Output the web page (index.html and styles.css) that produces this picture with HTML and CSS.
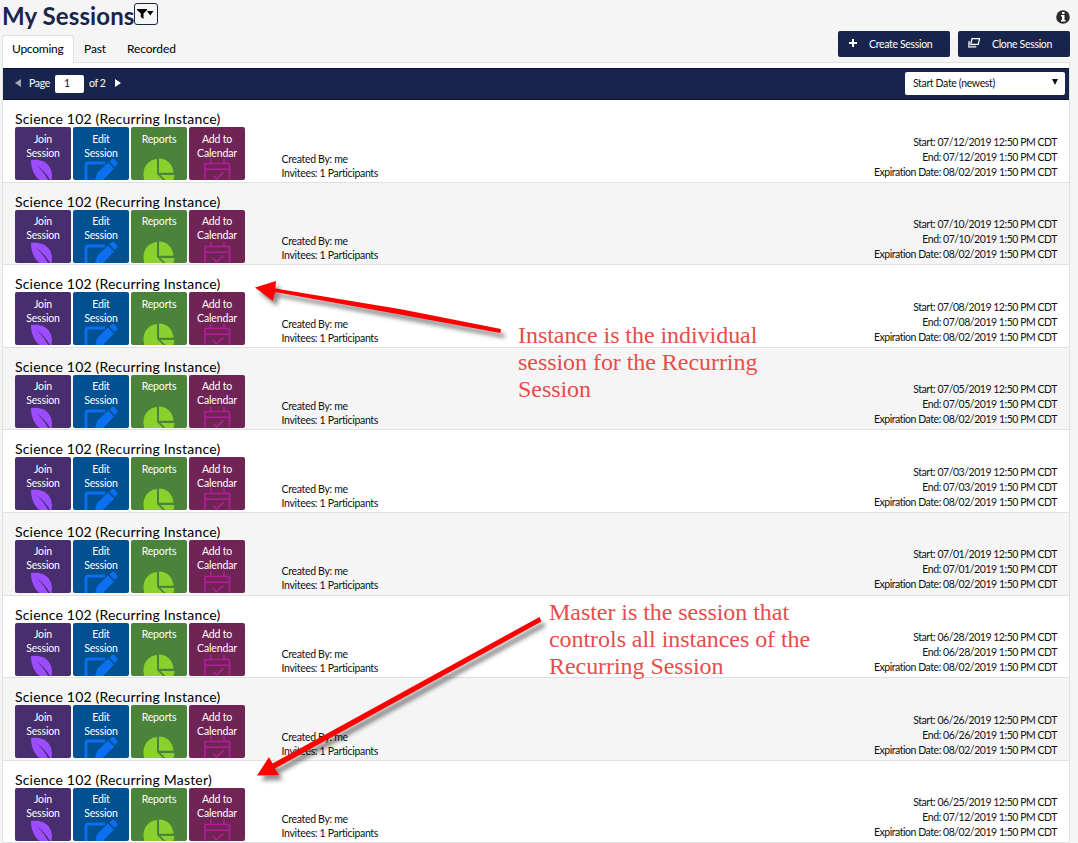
FILE: index.html
```html
<!DOCTYPE html>
<html lang="en">
  <head>
    <meta charset="utf-8" />
    <title>My Sessions</title>
    <link rel="stylesheet" href="styles.css">
  </head>
  <body>
    <!-- icons used by the action tiles -->
    <svg width="0" height="0" class="sprites">
      <symbol id="leaf" viewBox="0 0 24 20" overflow="visible">
        <path fill="#9b4dff" d="M0 0C9-1 14 1 18 6q3 4 3 9l-.5 6H10C3 17 0 8 0 0z"/>
        <path fill="#482e6e" d="M4 4c6 4 11 9 15 16h-2C14 14 9 8 4 4z"/>
      </symbol>
      <symbol id="edit" viewBox="0 0 34 20" overflow="visible">
        <path fill="none" stroke="#0b6ff0" stroke-width="2.800" d="M21 3H4q-2 0-2 2v16"/>
        <path fill="#0b6ff0" d="M10.700 21l2.500-8L24 2.500l6 6L18 21zM25.500 1.500L28-.7q1.200-1 2.400 0L33 2.200q1 1.200 0 2.400L31 7z"/>
      </symbol>
      <symbol id="pie" viewBox="0 0 32 20" overflow="visible">
        <path fill="#8ad12d" d="M14-1v15l7 7H1.500C-2 9 4 0 14-1z"/>
        <path fill="#8ad12d" d="M16-1.500c8 0 14 6 14.500 14.200H16zM17.500 15h14q-.5 3-1.500 6h-6.500z"/>
      </symbol>
      <symbol id="cal" viewBox="0 0 26 20" overflow="visible">
        <path fill="none" stroke="#b01f98" stroke-width="1.600" d="M1 21V3.500h24.500V21M1 9.300h24M6.700-1.500v5M20-1.500v5M9 15.500l3.500 3.500 7-6.500"/>
      </symbol>
    </svg>

    <div class="header">
      <div class="title">My Sessions</div>
      <div class="filter">
        <svg width="18" height="12" viewBox="0 0 18 12"><path d="M0 1h10v1L6.500 5.500V11L3.800 9V5.500L0 2zM10 3h6.500l-3.200 4.500z"/></svg>
      </div>
      <svg class="info" width="14" height="14" viewBox="0 0 14 14">
        <circle cx="7" cy="7" r="6.800" fill="#2b2b2b"/>
        <path fill="#fff" d="M6 2h2.500v2H6zM5 5h3.500v5H9.500v1.500H5V10h1V6.500H5z"/>
      </svg>
    </div>

    <div class="nav">
      <div class="tab active">Upcoming</div>
      <div class="tab past">Past</div>
      <div class="tab">Recorded</div>
      <div class="buttons">
        <div class="btn create">
          <svg width="14" height="12" viewBox="0 0 14 12"><path fill="none" stroke="#fff" stroke-width="2" d="M5 1v8M1 5h8"/></svg>
          <span>Create Session</span>
        </div>
        <div class="btn clone">
          <svg width="14" height="12" viewBox="0 0 14 12"><path fill="none" stroke="#fff" stroke-width="1.200" d="M4 .6h7.500l-1.200 5.800H2.800z"/><path fill="none" stroke="#b9bdcb" stroke-width="2" d="M1.500 3L.3 8.800h8"/></svg>
          <span>Clone Session</span>
        </div>
      </div>
    </div>

    <div class="panel">
      <div class="pager">
        <i class="arrow prev"></i>
        <span>Page</span>
        <div class="pageBox">1</div>
        <span>of 2</span>
        <i class="arrow next"></i>
        <div class="sort"><span>Start Date (newest)</span><i class="down"></i></div>
      </div>
      <div id="sessions"></div>
    </div>

    <!-- notes over the list -->
    <svg class="arrows" width="1078" height="843" viewBox="0 0 1078 843">
      <g fill="red">
        <path d="M255 287.500l21-6.500-.6 7.600 125.600 20.700 100 19.700-.7 4L400 314.500l-125-22.500-2.200 9z"/>
        <path d="M257 775.500l12-18.500 3.500 6.500L539.500 617l2 4.500L275 768.500l4 6.500z"/>
      </g>
    </svg>
    <div class="note instance">Instance is the individual<br>session for the Recurring<br>Session</div>
    <div class="note master">Master is the session that<br>controls all instances of the<br>Recurring Session</div>

    <script src="sessions.js"></script>
  </body>
</html>
```

FILE: styles.css
```css
* {
  box-sizing: border-box;
}
body {
  margin: 0;
  height: 843px;
  overflow: hidden;
  position: relative;
  background: #f5f5f5;
  font-family: Lato, sans-serif;
  font-size: 10.5px;
  color: #111;
}
.sprites {
  position: absolute;
}
.header {
  display: flex;
  align-items: flex-start;
  height: 35px;
  padding: 3px 8px 0 2px;
}
.title {
  font-size: 24px;
  line-height: 26px;
  font-weight: 700;
  color: #17244b;
  width: 132px;
  letter-spacing: 0.1px;
  white-space: nowrap;
}
.filter {
  width: 24px;
  height: 22px;
  border: 1px solid #17244b;
  border-radius: 3px;
  padding: 4px 0 0 2px;
}
.filter svg {
  display: block;
}
.info {
  margin: 7px 0 0 auto;
}

/* tabs */
.nav {
  display: flex;
  height: 28px;
  margin-left: 2px;
  font-size: 12px;
}
.tab {
  height: 27px;
  line-height: 28px;
  padding: 0 10px;
  color: #000;
  letter-spacing: -0.13px;
}
.tab.active {
  position: relative;
  height: 28px;
  width: 72px;
  padding: 0 0 0 9px;
  line-height: 26px;
  letter-spacing: -0.25px;
  background: #fff;
  border: 1px solid #e0e0e0;
  border-bottom: 0;
  border-radius: 3px 3px 0 0;
  z-index: 1;
}
.tab.past {
  width: 43px;
}
.buttons {
  display: flex;
  gap: 8px;
  margin: -4px 8px 0 auto;
}
.btn {
  display: flex;
  align-items: center;
  width: 112px;
  height: 26px;
  padding: 0 0 1px 10px;
  border-radius: 2px;
  background: #17244b;
  color: #fff;
  font-size: 10.5px;
  letter-spacing: -0.32px;
  white-space: nowrap;
}
.btn span {
  margin-left: 7px;
}
.btn.clone span {
  margin-left: 10px;
}

/* list */
.panel {
  width: 1068px;
  margin: -1px 0 0 2px;
  padding-top: 5px;
  border: 1px solid #e0e0e0;
  border-bottom: 0;
  background: #fff;
}
.pager {
  display: flex;
  align-items: center;
  height: 32px;
  padding: 0 4px 0 12px;
  background: #17244b;
  border-top: 1px solid #0b1533;
  border-bottom: 1px solid #0b1533;
  color: #fff;
  letter-spacing: -0.35px;
}
.pager > span {
  margin-top: -2px;
}
.arrow {
  border: 4px solid transparent;
  border-left-width: 0;
  border-right: 6px solid #a3a8b7;
  margin-top: -2px;
}
.arrow.next {
  border-right-width: 0;
  border-left: 6px solid #fff;
  margin-left: 9px;
}
.arrow.prev {
  margin-right: 8px;
}
.pageBox {
  width: 29px;
  height: 18px;
  margin: 0 5px;
  padding-left: 9px;
  line-height: 17px;
  border-radius: 2px;
  background: #fff;
  color: #111;
}
.sort {
  display: flex;
  justify-content: space-between;
  align-items: center;
  width: 160px;
  height: 23px;
  margin: -2px 0 0 auto;
  padding: 0 7px 0 8px;
  border-radius: 2px;
  background: #fff;
  color: #111;
}
.down {
  border: 3px solid transparent;
  border-top: 6px solid #111;
  border-bottom: 0;
  margin-top: -2px;
}
.row {
  display: flex;
  height: 82.6px;
  padding: 10px 12px 0 12px;
  border-bottom: 1px solid #e0e0e0;
}
.row:nth-child(even) {
  background: #f5f5f5;
}
.left {
  width: 266.5px;
}
.name {
  height: 17px;
  line-height: 17px;
  font-size: 14px;
  letter-spacing: 0.19px;
  color: #000;
  white-space: nowrap;
}
.tiles {
  display: flex;
  gap: 2px;
}
.tile {
  display: flex;
  flex-direction: column;
  align-items: center;
  width: 56px;
  height: 53px;
  padding-top: 4.5px;
  overflow: hidden;
  border-radius: 2px;
  color: #fff;
  font-size: 10.5px;
  letter-spacing: -0.15px;
  line-height: 14px;
  text-align: center;
}
.tile span {
  height: 28.5px;
}
.tile svg {
  flex-shrink: 0;
  display: block;
  overflow: visible;
}
.join { background: #482e6e; }
.edit { background: #005191; }
.reports { background: #4b833b; }
.calendar { background: #702455; }
.who {
  padding-top: 41.5px;
  line-height: 14px;
  letter-spacing: -0.32px;
}
.when {
  margin-left: auto;
  padding-top: 24.5px;
  line-height: 15px;
  letter-spacing: -0.46px;
  text-align: right;
}

/* notes */
.arrows {
  position: absolute;
  left: 0;
  top: 0;
  filter: drop-shadow(4px 5px 2px rgba(0, 0, 0, 0.45));
}
.note {
  position: absolute;
  font-family: "Liberation Serif", serif;
  font-size: 24px;
  letter-spacing: -0.05px;
  line-height: 27px;
  color: #e84c4c;
  white-space: nowrap;
}
.instance {
  left: 518px;
  top: 322px;
}
.master {
  left: 549px;
  top: 599px;
}
```

FILE: sessions.js
```js
var sessions = [
  { type: "Instance", start: "07/12/2019", end: "07/12/2019" },
  { type: "Instance", start: "07/10/2019", end: "07/10/2019" },
  { type: "Instance", start: "07/08/2019", end: "07/08/2019" },
  { type: "Instance", start: "07/05/2019", end: "07/05/2019" },
  { type: "Instance", start: "07/03/2019", end: "07/03/2019" },
  { type: "Instance", start: "07/01/2019", end: "07/01/2019" },
  { type: "Instance", start: "06/28/2019", end: "06/28/2019" },
  { type: "Instance", start: "06/26/2019", end: "06/26/2019" },
  { type: "Master", start: "06/25/2019", end: "07/12/2019" }
];

document.getElementById("sessions").innerHTML = sessions.map(function (s) {
  return `
    <div class="row">
      <div class="left">
        <div class="name">Science 102 (Recurring ${s.type})</div>
        <div class="tiles">
          <div class="tile join"><span>Join<br>Session</span><svg width="24" height="20"><use href="#leaf"/></svg></div>
          <div class="tile edit"><span>Edit<br>Session</span><svg width="34" height="20"><use href="#edit"/></svg></div>
          <div class="tile reports"><span>Reports</span><svg width="32" height="20"><use href="#pie"/></svg></div>
          <div class="tile calendar"><span>Add to<br>Calendar</span><svg width="26" height="20"><use href="#cal"/></svg></div>
        </div>
      </div>
      <div class="who">Created By: me<br>Invitees: 1 Participants</div>
      <div class="when">Start: ${s.start} 12:50 PM CDT<br>End: ${s.end} 1:50 PM CDT<br>Expiration Date: 08/02/2019 1:50 PM CDT</div>
    </div>`;
}).join("");
```
